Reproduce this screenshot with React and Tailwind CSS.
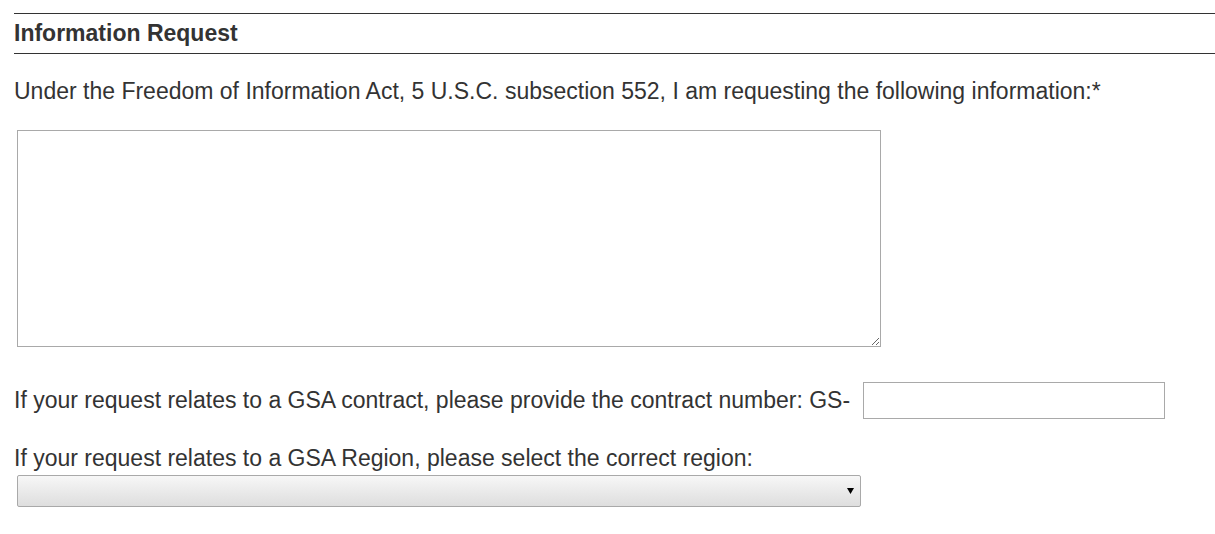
export default function App() {
  return (
    <div className="min-h-screen bg-white pl-[14px] pt-[13px] text-[#333]" style={{ fontFamily: '"Liberation Sans", Arial, sans-serif' }}>
      <h2 className="border-y border-[#333] text-[23px] font-bold leading-[39px]">Information Request</h2>

      <p className="mt-[23px] text-[23px] leading-[28px]">
        Under the Freedom of Information Act, 5 U.S.C. subsection 552, I am requesting the following information:*
      </p>

      <textarea className="ml-[3px] mt-[25px] block h-[217px] w-[864px] border border-[#a9a9a9] bg-white outline-none" />

      <div className="mt-[35px] flex items-start">
        <span className="mt-[4px] text-[23px] leading-[28px]">If your request relates to a GSA contract, please provide the contract number: GS-</span>
        <input type="text" className="ml-[13px] h-[37px] w-[302px] border border-[#a9a9a9] bg-white outline-none" />
      </div>

      <p className="mt-[25px] text-[23px] leading-[28px]">If your request relates to a GSA Region, please select the correct region:</p>

      <div className="relative ml-[3px] mt-[3px] h-[32px] w-[844px] rounded-[2px] border border-[#a9a9a9] bg-gradient-to-b from-[#f7f7f7] to-[#dedede]">
        <svg className="absolute right-[6px] top-[12px]" width="7" height="6" viewBox="0 0 7 6">
          <path d="M0 0H7L3.5 6Z" fill="#000" />
        </svg>
      </div>
    </div>
  );
}
